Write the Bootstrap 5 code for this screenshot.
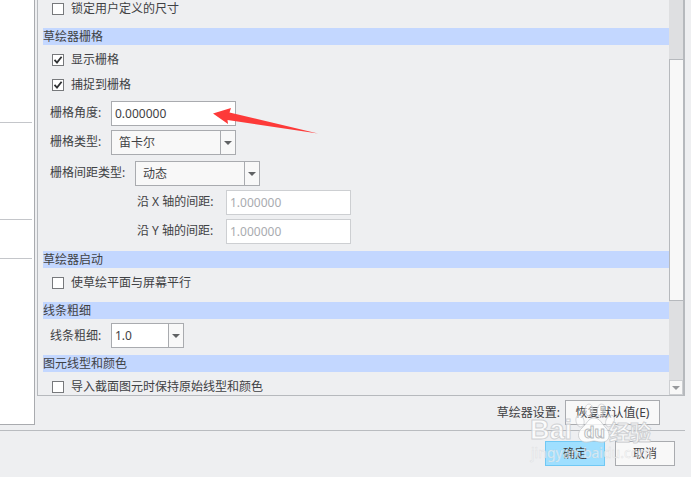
<!DOCTYPE html>
<html lang="zh-CN">
<head>
<meta charset="utf-8">
<meta name="viewport" content="width=device-width, initial-scale=1">
<title>草绘器设置</title>
<link href="https://cdn.jsdelivr.net/npm/bootstrap@5.3.0/dist/css/bootstrap.min.css" rel="stylesheet">
<style>
  body { font: 12px/17px "Noto Sans", "Noto Sans CJK SC", sans-serif; color: #3f4144; background: #fff; }
  .dialog { background: #eeeff1; margin-right: 1px; overflow: hidden; }
  .side-list { width: 35px; background: #fff; border-right: 1px solid #a9abaf; border-bottom: 1px solid #a9abaf; }
  .side-list hr { margin: 0 2px 0 0; border-color: #c4c6ca; opacity: 1; }
  .gap-a { height: 122px; } .gap-b { height: 96px; } .gap-c { height: 38px; }
  .main-col { padding: 0 6px 0 2px; }
  .panel { border: 1px solid #b6b9bd; border-width: 0 2px 1px 1px; }
  .options { padding-left: 5px; }
  .group-title { font-size: 12px; line-height: 17px; margin: 7px 0 0; background: #c3d7ff; font-weight: 400; }
  .group-title.after-check { margin-top: 11px; }
  .check-row { margin: 6px 0 0 9px; height: 17px; gap: 7px; }
  .check-row.first { margin-top: 0; }
  .check-row + .check-row { margin-top: 8px; }
  .check-row input { appearance: none; width: 12px; height: 12px; margin: 0; border: 1px solid #77797c; background: #fff; }
  .check-row input:checked { background: #fff url("data:image/svg+xml,%3Csvg xmlns='http://www.w3.org/2000/svg' viewBox='0 0 10 10'%3E%3Cpath d='M1.5 4.8 4 7.6 8.6 1.8' fill='none' stroke='%23303234' stroke-width='1.8'/%3E%3C/svg%3E") center / 10px 10px no-repeat; }
  .field-row { margin: 4px 0 0 7px; }
  .field-row.spaced { margin-top: 8px; }
  .field-row.wide { margin-top: 6px; }
  .field-row label { width: 61px; line-height: 23px; white-space: nowrap; }
  .field-row.wide label { width: 85px; }
  .field-row.inset { margin-left: 94px; }
  .field-row.inset label { width: 89px; }
  .field { font: inherit; color: #3f4144; height: 25px; width: 125px; padding: 0 3px; border: 1px solid #a9abaf; border-radius: 0; background: #fff; }
  .field:disabled { color: #a9abaf; border-color: #cdcfd2; opacity: 1; }
  select.field {
    appearance: none; padding-left: 7px; background-color: #f8f8f8;
    background-image: url("data:image/svg+xml,%3Csvg xmlns='http://www.w3.org/2000/svg' viewBox='0 0 8 4'%3E%3Cpath d='M0 0h8L4 4z' fill='%23606264'/%3E%3C/svg%3E"), linear-gradient(#a9abaf, #a9abaf);
    background-size: 8px 4px, 1px 100%; background-position: right 3px center, right 14px top; background-repeat: no-repeat;
  }
  select.width-field { width: 73px; padding-left: 3px; background-image: url("data:image/svg+xml,%3Csvg xmlns='http://www.w3.org/2000/svg' viewBox='0 0 8 4'%3E%3Cpath d='M0 0h8L4 4z' fill='%23606264'/%3E%3C/svg%3E"), linear-gradient(#a9abaf, #a9abaf), linear-gradient(#f8f8f8, #f8f8f8); background-color: #fff; background-size: 8px 4px, 1px 100%, 14px 100%; background-position: right 3px center, right 14px top, right top; }
  .scroll { width: 14px; background: #dedfe1; }
  .track { height: 59px; }
  .thumb { height: 242px; border: 1px solid #b6b9bd; border-right: 0; background: #f8f8f8; }
  .step { height: 15px; border: 1px solid #cdcfd2; background: #f8f8f8; padding: 0; }
  .push { font: inherit; color: #3f4144; height: 25px; width: 60px; padding: 0; border: 1px solid #a9abaf; border-radius: 0; background: #f8f8f8; }
  .push.reset { width: 95px; }
  .push.ok { background: #9fdfff; border-color: #70c8f4; }
  .actions { padding-top: 4px; padding-right: 25px; gap: 5px; }
  .rule { margin: 5px 6px 0 0; border-color: #b9bcc0; opacity: 1; }
  .dialog-foot { padding: 10px 16px 11px; gap: 10px; }
  .pointer { left: 213px; top: 107px; pointer-events: none; }
  .watermark { right: 36px; bottom: 10px; pointer-events: none; }
</style>
<script src="https://cdn.jsdelivr.net/npm/bootstrap@5.3.0/dist/js/bootstrap.bundle.min.js"></script>
</head>
<body>
<div class="dialog position-relative">
  <div class="d-flex">
    <aside class="side-list flex-shrink-0">
      <div class="gap-a"></div><hr><div class="gap-b"></div><hr><div class="gap-c"></div><hr>
    </aside>
    <main class="main-col flex-grow-1">
      <div class="panel d-flex">
        <form class="options flex-grow-1">
          <div class="check-row first d-flex align-items-center"><input type="checkbox" id="lock"><label for="lock">锁定用户定义的尺寸</label></div>

          <h2 class="group-title after-check">草绘器栅格</h2>
          <div class="check-row d-flex align-items-center"><input type="checkbox" id="show" checked><label for="show">显示栅格</label></div>
          <div class="check-row d-flex align-items-center"><input type="checkbox" id="snap" checked><label for="snap">捕捉到栅格</label></div>
          <div class="field-row spaced d-flex"><label for="angle">栅格角度:</label><input class="field" type="text" id="angle" value="0.000000"></div>
          <div class="field-row d-flex"><label for="gtype">栅格类型:</label><select class="field" id="gtype"><option>笛卡尔</option></select></div>
          <div class="field-row wide d-flex"><label for="stype">栅格间距类型:</label><select class="field" id="stype"><option>动态</option></select></div>
          <div class="field-row inset d-flex"><label for="sx">沿 X 轴的间距:</label><input class="field" type="text" id="sx" value="1.000000" disabled></div>
          <div class="field-row inset d-flex"><label for="sy">沿 Y 轴的间距:</label><input class="field" type="text" id="sy" value="1.000000" disabled></div>

          <h2 class="group-title">草绘器启动</h2>
          <div class="check-row d-flex align-items-center"><input type="checkbox" id="parallel"><label for="parallel">使草绘平面与屏幕平行</label></div>

          <h2 class="group-title after-check">线条粗细</h2>
          <div class="field-row d-flex align-items-center"><label for="weight">线条粗细:</label><select class="field width-field" id="weight"><option>1.0</option></select></div>

          <h2 class="group-title">图元线型和颜色</h2>
          <div class="check-row d-flex align-items-center"><input type="checkbox" id="keep"><label for="keep">导入截面图元时保持原始线型和颜色</label></div>
        </form>
        <div class="scroll d-flex flex-column flex-shrink-0">
          <div class="track"></div>
          <div class="thumb"></div>
          <button type="button" class="step mt-auto d-flex align-items-center justify-content-center" aria-label="向下滚动"><svg width="8" height="4" viewBox="0 0 8 4"><path d="M0 0h8L4 4z" fill="#97999c"/></svg></button>
        </div>
      </div>
      <div class="actions d-flex justify-content-end align-items-center">
        <span>草绘器设置:</span>
        <button type="button" class="push reset">恢复默认值(E)</button>
      </div>
    </main>
  </div>
  <hr class="rule">
  <div class="dialog-foot d-flex justify-content-end">
    <button type="button" class="push ok">确定</button>
    <button type="button" class="push">取消</button>
  </div>

  <svg class="pointer position-absolute" width="106" height="28" viewBox="0 0 106 28" aria-hidden="true"><path d="M0 6.5 18 1 16.500 5.500 105 26.500 14.500 13 15 17z" fill="#fd3a39"/></svg>

  <svg class="watermark position-absolute" width="126" height="66" viewBox="0 0 126 66" aria-hidden="true" font-family="'Liberation Sans', 'Noto Sans CJK SC', sans-serif">
    <g fill="#fff" fill-opacity=".5" stroke="#c3c5c8" stroke-opacity=".6" stroke-width="1">
      <ellipse cx="51" cy="20" rx="4" ry="6" transform="rotate(-15 51 20)"/>
      <ellipse cx="60" cy="9" rx="4" ry="6"/>
      <ellipse cx="72" cy="9" rx="4" ry="6" transform="rotate(12 72 9)"/>
      <ellipse cx="81" cy="20" rx="4" ry="6" transform="rotate(25 81 20)"/>
    </g>
    <g fill="#fff" fill-opacity=".8" stroke="#c3c5c8" stroke-opacity=".75" stroke-width="1">
      <path d="M65 17c6 0 8 6 12 10 4 4 5 12-2 14-4 1-7-1-10-1s-6 2-10 1c-7-2-7-10-2-14 5-4 6-10 12-10z"/>
      <text x="1" y="38" font-size="27" font-weight="700">Bai</text>
      <text x="80" y="39" font-size="21" font-weight="700" font-family="'Noto Sans CJK SC', sans-serif">经验</text>
    </g>
    <text x="55" y="37" font-size="17" font-weight="700" fill="#fff" stroke="#b9bcc0" stroke-width="1">du</text>
    <text x="2" y="57" font-size="14" font-family="'Noto Sans', sans-serif" fill="#fff" fill-opacity=".6" stroke="#c5c7ca" stroke-opacity=".5" stroke-width=".5">jingyan.baidu.com</text>
  </svg>
</div>
</body>
</html>
